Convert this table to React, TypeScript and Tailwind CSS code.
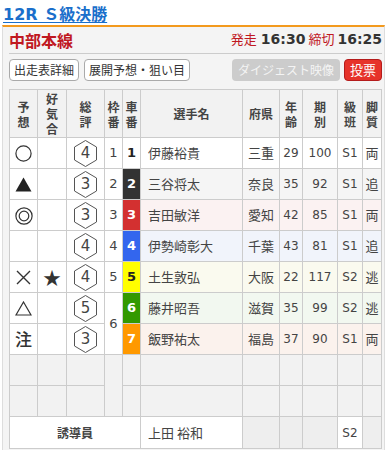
import React from "react";

type Row = {
  mark: string;
  kiai: string;
  score: number;
  waku: number | null;
  wakuSpan?: number;
  car: number;
  carCls: string;
  name: string;
  pref: string;
  age: number;
  term: number;
  cls: string;
  leg: string;
  rowBg: string;
};

const rows: Row[] = [
  { mark: "○", kiai: "", score: 4, waku: 1, car: 1, carCls: "bg-white text-[#222]", name: "伊藤裕貴", pref: "三重", age: 29, term: 100, cls: "S1", leg: "両", rowBg: "bg-white" },
  { mark: "▲", kiai: "", score: 3, waku: 2, car: 2, carCls: "bg-[#333333] text-white", name: "三谷将太", pref: "奈良", age: 35, term: 92, cls: "S1", leg: "追", rowBg: "bg-[#f5f5f5]" },
  { mark: "◎", kiai: "", score: 3, waku: 3, car: 3, carCls: "bg-[#d33030] text-white", name: "吉田敏洋", pref: "愛知", age: 42, term: 85, cls: "S1", leg: "両", rowBg: "bg-[#fbf2f2]" },
  { mark: "", kiai: "", score: 4, waku: 4, car: 4, carCls: "bg-[#3366ee] text-white", name: "伊勢崎彰大", pref: "千葉", age: 43, term: 81, cls: "S1", leg: "追", rowBg: "bg-[#f1f4fb]" },
  { mark: "×", kiai: "★", score: 4, waku: 5, car: 5, carCls: "bg-[#ffff00] text-[#222]", name: "土生敦弘", pref: "大阪", age: 22, term: 117, cls: "S2", leg: "逃", rowBg: "bg-[#fafaef]" },
  { mark: "△", kiai: "", score: 5, waku: 6, wakuSpan: 2, car: 6, carCls: "bg-[#339900] text-white", name: "藤井昭吾", pref: "滋賀", age: 35, term: 99, cls: "S2", leg: "逃", rowBg: "bg-[#f2f8f0]" },
  { mark: "注", kiai: "", score: 3, waku: null, car: 7, carCls: "bg-[#ff9900] text-white", name: "飯野祐太", pref: "福島", age: 37, term: 90, cls: "S1", leg: "両", rowBg: "bg-[#fbf2ed]" },
];

const Hex = ({ n }: { n: number }) => (
  <div className="inline-grid place-items-center align-middle">
    <svg width="23" height="27" viewBox="0 0 23 27" className="col-start-1 row-start-1">
      <polygon points="11.5,0.5 22.5,7 22.5,20 11.5,26.5 0.5,20 0.5,7" fill="white" stroke="#555" strokeWidth="1" />
    </svg>
    <span className="col-start-1 row-start-1 text-[15px] leading-none text-[#444]">{n}</span>
  </div>
);

// 予想 marks
const Mark = ({ m }: { m: string }) => {
  if (m === "○")
    return (
      <svg width="17" height="17" viewBox="0 0 17 17" className="inline-block align-middle">
        <circle cx="8.5" cy="8.5" r="7.6" fill="none" stroke="#333" strokeWidth="1.2" />
      </svg>
    );
  if (m === "◎")
    return (
      <svg width="18" height="18" viewBox="0 0 18 18" className="inline-block align-middle">
        <circle cx="9" cy="9" r="8.1" fill="none" stroke="#333" strokeWidth="1.2" />
        <circle cx="9" cy="9" r="4.8" fill="none" stroke="#333" strokeWidth="1.2" />
      </svg>
    );
  if (m === "▲")
    return (
      <svg width="17" height="15" viewBox="0 0 17 15" className="inline-block align-middle">
        <polygon points="8.5,0.5 16.5,14.5 0.5,14.5" fill="#222" />
      </svg>
    );
  if (m === "△")
    return (
      <svg width="17" height="15" viewBox="0 0 17 15" className="inline-block align-middle">
        <polygon points="8.5,1 16,14 1,14" fill="none" stroke="#333" strokeWidth="1.2" />
      </svg>
    );
  if (m === "×")
    return (
      <svg width="15" height="15" viewBox="0 0 15 15" className="inline-block align-middle">
        <path d="M1 1 L14 14 M14 1 L1 14" stroke="#333" strokeWidth="1.4" />
      </svg>
    );
  return <span className="font-['Noto_Sans_CJK_JP'] text-[17px] font-medium text-[#333]">{m}</span>;
};

const H = ({ lines }: { lines: string[] }) => (
  <th className="border border-[#cccccc] bg-[#f2f2f2] p-0 text-center align-middle font-['Noto_Sans_CJK_JP',sans-serif] text-[12px] font-bold leading-[15px] text-[#444]">
    {lines.map((l, i) => (
      <div key={i}>{l}</div>
    ))}
  </th>
);

const td = "border border-[#cccccc] p-0 text-center align-middle";
const jp = "font-['Noto_Sans_CJK_JP',sans-serif]";

export default function App() {
  return (
    <div className="w-[386px] bg-white font-['DejaVu_Sans','Noto_Sans_CJK_JP',sans-serif] text-[#333]">
      {/* TITLE */}
      <div className="h-[25px] pl-[3px] pt-[3px]">
        <span className="text-[16px] font-bold leading-[18px] text-[#1a6fcb] underline underline-offset-2">12R Ｓ級決勝</span>
      </div>

      {/* PANEL */}
      <div className="ml-[2px] mr-[1px] border-x border-t-2 border-x-[#dddddd] border-t-[#f39a1e] bg-[#f4f4f4] pl-[6px] pr-[2px] pb-[8px]">
        <div className="flex h-[27px] items-center justify-between border-b border-[#cccccc] pb-[1px]">
          <span className={`${jp} text-[16px] font-bold text-[#c0181f]`}>中部本線</span>
          <div className="flex items-baseline">
            <span className={`${jp} text-[13px] text-[#c0181f]`}>発走</span>
            <span className="ml-[4px] text-[14px] font-bold text-[#333]">16:30</span>
            <span className={`${jp} ml-[3px] text-[13px] text-[#c0181f]`}>締切</span>
            <span className="ml-[3px] text-[14px] font-bold text-[#333]">16:25</span>
          </div>
        </div>

        {/* BUTTONS */}
        <div className={`${jp} mt-[5px] flex items-center`}>
          <div className="flex h-[22px] items-center rounded-[4px] border border-[#aaaaaa] bg-white px-[4px] text-[12px] text-[#333]">出走表詳細</div>
          <div className="ml-[5px] flex h-[22px] items-center rounded-[4px] border border-[#aaaaaa] bg-white px-[4px] text-[12px] text-[#333]">展開予想・狙い目</div>
          <div className="ml-auto flex h-[22px] items-center rounded-[4px] bg-[#cccccc] px-[6px] text-[12px] text-[#f4f4f4]">ダイジェスト映像</div>
          <div className="ml-[4px] flex h-[22px] items-center rounded-[4px] border border-[#b41c1c] bg-[#e6332a] px-[5px] text-[13px] text-white">投票</div>
        </div>

        {/* TABLE */}
        <table className="mt-[8px] w-[372px] table-fixed border-collapse bg-white">
          <colgroup>
            <col className="w-[28px]" />
            <col className="w-[29px]" />
            <col className="w-[38px]" />
            <col className="w-[18px]" />
            <col className="w-[18px]" />
            <col className="w-[102px]" />
            <col className="w-[37px]" />
            <col className="w-[23px]" />
            <col className="w-[35px]" />
            <col className="w-[25px]" />
            <col className="w-[19px]" />
          </colgroup>
          <thead>
            <tr className="h-[48px]">
              <H lines={["予", "想"]} />
              <H lines={["好", "気", "合"]} />
              <H lines={["総", "評"]} />
              <H lines={["枠", "番"]} />
              <H lines={["車", "番"]} />
              <H lines={["選手名"]} />
              <H lines={["府県"]} />
              <H lines={["年", "齢"]} />
              <H lines={["期", "別"]} />
              <H lines={["級", "班"]} />
              <H lines={["脚", "質"]} />
            </tr>
          </thead>
          <tbody>
            {rows.map((r) => (
              <tr key={r.car} className="h-[31px]">
                <td className={`${td} bg-white`}>
                  <Mark m={r.mark} />
                </td>
                <td className={`${td} ${jp} bg-white text-[18px] text-[#333]`}>{r.kiai}</td>
                <td className={`${td} bg-white`}>
                  <Hex n={r.score} />
                </td>
                {r.waku !== null && (
                  <td rowSpan={r.wakuSpan ?? 1} className={`${td} bg-white text-[13px] text-[#444]`}>
                    {r.waku}
                  </td>
                )}
                <td className={`${td} ${r.carCls} text-[13px] font-bold`}>{r.car}</td>
                <td className={`${td} ${jp} ${r.rowBg} pl-[7px] text-left text-[13px] text-[#444]`}>{r.name}</td>
                <td className={`${td} ${jp} ${r.rowBg} text-[13px] text-[#444]`}>{r.pref}</td>
                <td className={`${td} ${r.rowBg} text-[12px] text-[#444]`}>{r.age}</td>
                <td className={`${td} ${r.rowBg} text-[12px] text-[#444]`}>{r.term}</td>
                <td className={`${td} ${r.rowBg} text-[12px] text-[#444]`}>{r.cls}</td>
                <td className={`${td} ${jp} ${r.rowBg} text-[13px] text-[#444]`}>{r.leg}</td>
              </tr>
            ))}
            <tr className="h-[31px] bg-[#f2f2f2]">
              <td className={td}></td>
              <td className={td}></td>
              <td className={td}></td>
              <td rowSpan={2} className={td}></td>
              <td className={td}></td>
              <td className={td}></td>
              <td className={td}></td>
              <td className={td}></td>
              <td className={td}></td>
              <td className={td}></td>
              <td className={td}></td>
            </tr>
            <tr className="h-[31px] bg-[#f2f2f2]">
              <td className={td}></td>
              <td className={td}></td>
              <td className={td}></td>
              <td className={td}></td>
              <td className={td}></td>
              <td className={td}></td>
              <td className={td}></td>
              <td className={td}></td>
              <td className={td}></td>
              <td className={td}></td>
            </tr>
            <tr className="h-[32px]">
              <td colSpan={5} className={`${td} ${jp} bg-white text-[12px] font-bold text-[#444]`}>誘導員</td>
              <td className={`${td} ${jp} bg-white pl-[7px] text-left text-[13px] text-[#444]`}>上田 裕和</td>
              <td className={`${td} bg-[#eeeeee]`}></td>
              <td className={`${td} bg-[#eeeeee]`}></td>
              <td className={`${td} bg-[#eeeeee]`}></td>
              <td className={`${td} bg-white text-[12px] text-[#444]`}>S2</td>
              <td className={`${td} bg-[#eeeeee]`}></td>
            </tr>
          </tbody>
        </table>
      </div>
    </div>
  );
}
